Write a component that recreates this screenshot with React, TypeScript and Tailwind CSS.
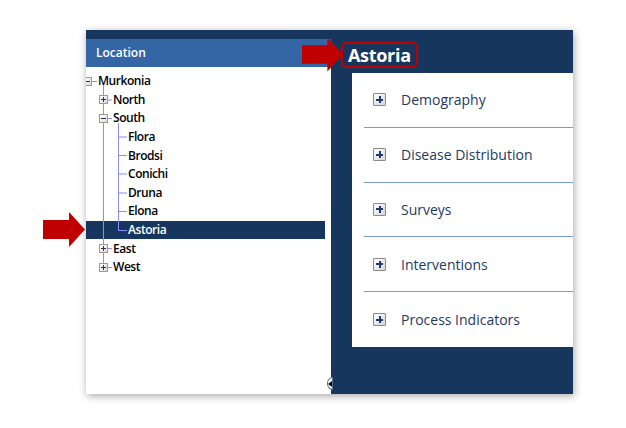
import React from "react";

const tree = [
  { label: "Murkonia", level: 0, box: "minus" },
  { label: "North", level: 1, box: "plus" },
  { label: "South", level: 1, box: "minus" },
  { label: "Flora", level: 2 },
  { label: "Brodsi", level: 2 },
  { label: "Conichi", level: 2 },
  { label: "Druna", level: 2 },
  { label: "Elona", level: 2 },
  { label: "Astoria", level: 2, selected: true },
  { label: "East", level: 1, box: "plus" },
  { label: "West", level: 1, box: "plus" },
];

const sections = ["Demography", "Disease Distribution", "Surveys", "Interventions", "Process Indicators"];

const TreeBox = ({ kind }: { kind: string }) => (
  <span className="w-[9px] h-[9px] border border-[#9a9a9a] bg-gradient-to-br from-white to-[#dcdcdc] flex items-center justify-center relative">
    <span className="absolute w-[5px] h-px bg-[#333]" />
    {kind === "plus" && <span className="absolute w-px h-[5px] bg-[#333]" />}
  </span>
);

const PlusIcon = () => (
  <span className="w-[13px] h-[13px] shrink-0 border border-[#8a8a8a] rounded-[1px] bg-gradient-to-br from-white to-[#d6d6d6] flex items-center justify-center relative">
    <span className="absolute w-[7px] h-[2px] bg-[#1f3a73]" />
    <span className="absolute w-[2px] h-[7px] bg-[#1f3a73]" />
  </span>
);

const Arrow = ({ className }: { className: string }) => (
  <svg className={className} viewBox="0 0 42 35">
    <polygon points="0,8 26,8 26,0 42,17.5 26,35 26,27 0,27" fill="#c00000" />
  </svg>
);

export default function App() {
  return (
    <div
      className="w-[626px] h-[428px] bg-white relative pl-[86px] pt-[30px]"
      style={{ fontFamily: '"Open Sans", "Noto Sans", sans-serif' }}
    >
      <div className="w-[487px] h-[364px] bg-[#17365d] flex overflow-hidden relative shadow-[1px_2px_8px_rgba(0,0,0,0.35)]">
        {/* left: location tree */}
        <div className="w-[245px] shrink-0 mt-[9px] bg-white flex flex-col">
          <div className="h-[28px] bg-[#3465a4] text-white text-[12px] font-semibold flex items-center pl-[10px]">
            Location
          </div>
          <div className="relative pt-[5px] pr-[6px] text-[12px] font-semibold text-black tracking-[-0.45px]">
            <svg className="absolute left-0 top-0 w-[245px] h-[220px]" viewBox="0 0 245 220">
              <g stroke="#8c8cff" strokeWidth="1" fill="none">
                <line x1="17.5" y1="18" x2="17.5" y2="200" />
                <line x1="6" y1="14.5" x2="11" y2="14.5" />
                <line x1="21" y1="33" x2="26" y2="33" />
                <line x1="21" y1="51.5" x2="26" y2="51.5" />
                <line x1="21" y1="181.5" x2="26" y2="181.5" />
                <line x1="21" y1="200.5" x2="26" y2="200.5" />
                <line x1="32.5" y1="56" x2="32.5" y2="163" />
                <line x1="32" y1="70" x2="41" y2="70" />
                <line x1="32" y1="88.5" x2="41" y2="88.5" />
                <line x1="32" y1="107" x2="41" y2="107" />
                <line x1="32" y1="126" x2="41" y2="126" />
                <line x1="32" y1="144.5" x2="41" y2="144.5" />
                <line x1="32" y1="163" x2="41" y2="163" />
              </g>
            </svg>
            {tree.map((n) => (
              <div
                key={n.label}
                className={`h-[18.6px] flex items-center relative ${n.selected ? "bg-[#17365d] text-white" : ""}`}
              >
                {n.level === 0 && (
                  <>
                    <span className="absolute left-[-3px]"><TreeBox kind="minus" /></span>
                    <span className="pl-[12px]">{n.label}</span>
                  </>
                )}
                {n.level === 1 && (
                  <>
                    <span className="absolute left-[13px]"><TreeBox kind={n.box as string} /></span>
                    <span className="pl-[27px]">{n.label}</span>
                  </>
                )}
                {n.level === 2 && (
                  <>
                    {n.selected && (
                      <svg className="absolute left-0 top-0 w-[45px] h-[19px]" viewBox="0 0 45 19">
                        <line x1="17.5" y1="0" x2="17.5" y2="19" stroke="#8c8cff" />
                        <line x1="32.5" y1="0" x2="32.5" y2="9.5" stroke="#8c8cff" />
                        <line x1="32" y1="9.5" x2="41" y2="9.5" stroke="#8c8cff" />
                      </svg>
                    )}
                    <span className="pl-[42px] relative">{n.label}</span>
                  </>
                )}
              </div>
            ))}
          </div>
        </div>

        {/* right: details */}
        <div className="flex-1 min-w-0 pl-[21px] flex flex-col relative">
          <div className="h-[43px] flex items-start pt-[12px] ml-[-11px]">
            <div className="h-[26px] border-[2.5px] border-[#c00000] rounded-[5px] px-[5px] flex items-center text-white text-[18px] font-bold tracking-[-0.3px]">
              Astoria
            </div>
          </div>
          <div className="w-[260px] h-[274px] shrink-0 bg-white flex flex-col">
            {sections.map((s, i) => (
              <div
                key={s}
                className={`h-[55px] ml-[12px] flex items-center gap-[15px] pl-[9px] text-[14px] font-medium text-[#1f3864] ${
                  i < sections.length - 1 ? "border-b-[1.5px] border-[#7b9cc7]" : ""
                }`}
              >
                <PlusIcon />
                <span className="whitespace-nowrap">{s}</span>
              </div>
            ))}
          </div>
          <span className="absolute left-[-4px] top-[347px] w-[6px] h-[13px] rounded-l-full border border-[#5a6f90] bg-white flex items-center justify-end">
            <span className="w-0 h-0 border-y-[3px] border-y-transparent border-r-[4px] border-r-black" />
          </span>
        </div>
      </div>

      <Arrow className="absolute left-[43px] top-[212px] w-[42px] h-[35px]" />
      <Arrow className="absolute left-[302px] top-[37px] w-[41px] h-[35px]" />
    </div>
  );
}
